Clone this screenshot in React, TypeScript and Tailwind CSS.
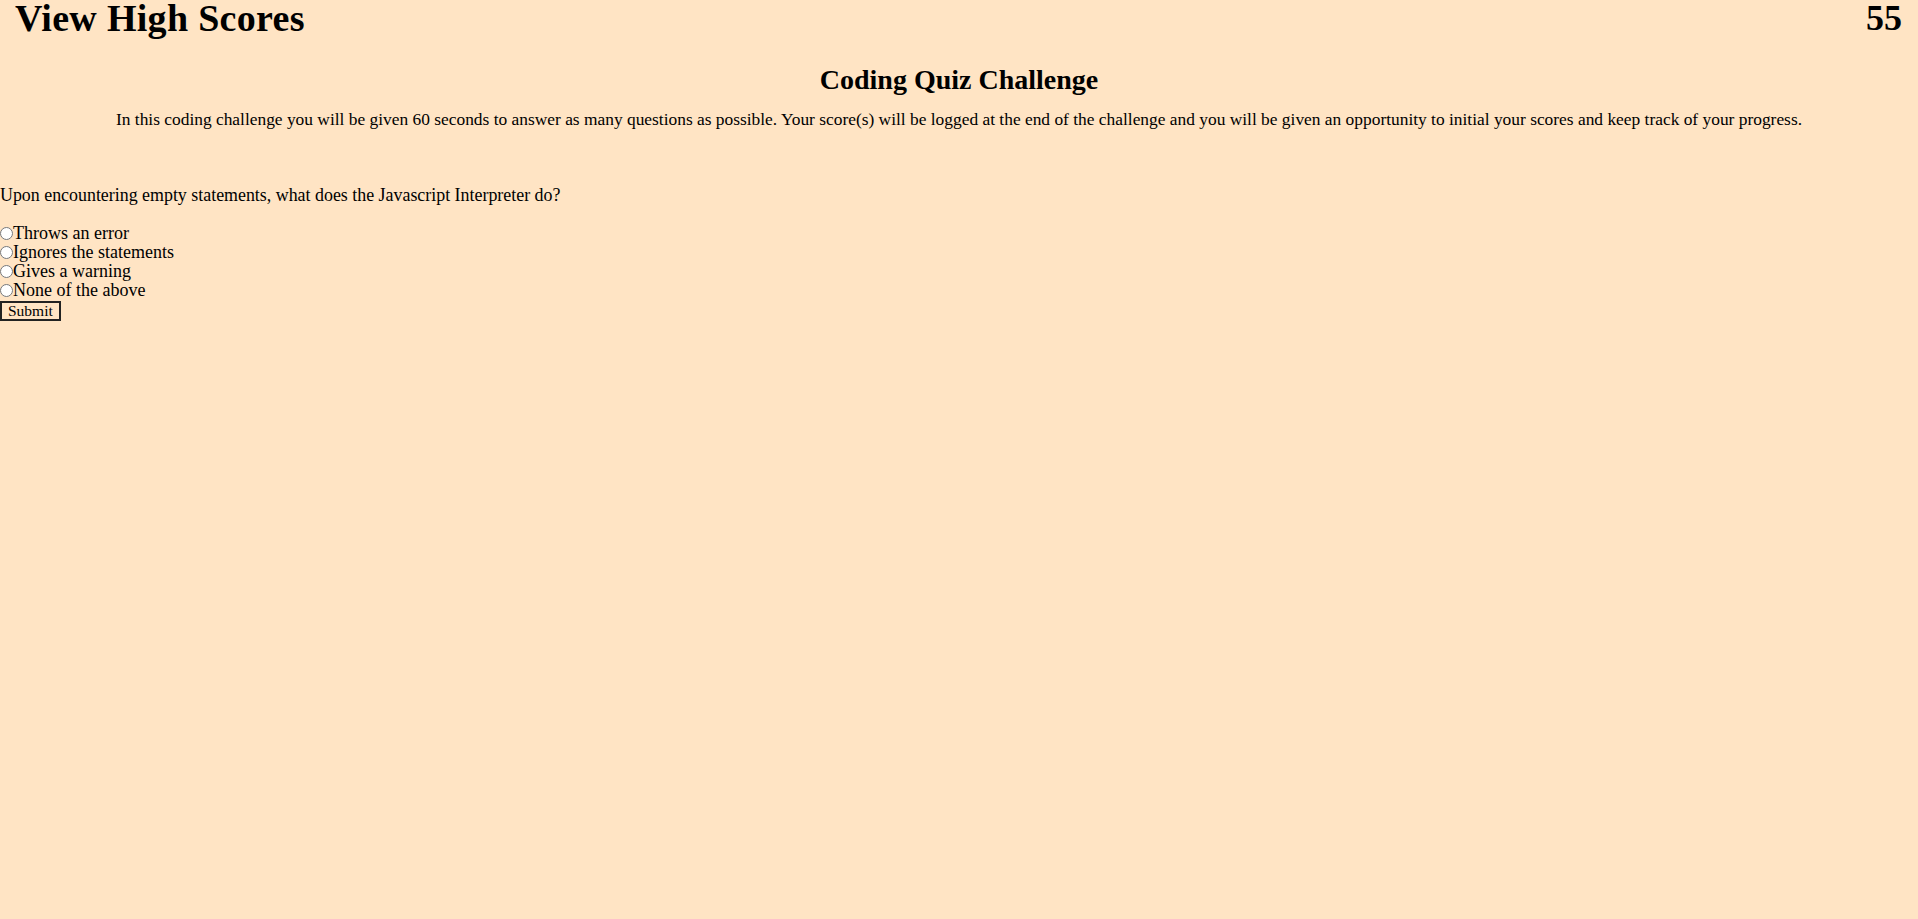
export default function App() {
  const answers = [
    "Throws an error",
    "Ignores the statements",
    "Gives a warning",
    "None of the above",
  ];
  return (
    <div className="min-h-screen w-full bg-[#ffe4c4] text-black font-['Liberation_Serif',serif]">
      <header className="flex h-[36px] items-center justify-between pl-[15px] pr-[16px]">
        <h1 className="m-0 text-[38px] font-bold leading-[36px] tracking-[0.3px]">View High Scores</h1>
        <h1 className="m-0 text-[36px] font-bold leading-[36px]">55</h1>
      </header>
      <h2 className="mt-[30px] text-center text-[28px] font-bold leading-[27px]">
        Coding Quiz Challenge
      </h2>
      <p className="mt-[17px] text-center text-[17.4px] leading-[19px]">
        In this coding challenge you will be given 60 seconds to answer as many questions as
        possible. Your score(s) will be logged at the end of the challenge and you will be given
        an opportunity to initial your scores and keep track of your progress.
      </p>
      <p className="mt-[57px] text-[17.9px] leading-[18px]">
        Upon encountering empty statements, what does the Javascript Interpreter do?
      </p>
      <form className="mt-[20px]" onSubmit={(e) => e.preventDefault()}>
        {answers.map((a) => (
          <label key={a} className="flex h-[19px] items-center text-[18px] leading-[19px]">
            <input type="radio" name="answer" className="m-0 h-[13px] w-[13px]" />
            <span>{a}</span>
          </label>
        ))}
        <button
          type="submit"
          className="mt-[1px] block h-[20px] border-2 border-[#222] bg-transparent px-[6px] text-[15.5px] leading-[16px]"
        >
          Submit
        </button>
      </form>
    </div>
  );
}
